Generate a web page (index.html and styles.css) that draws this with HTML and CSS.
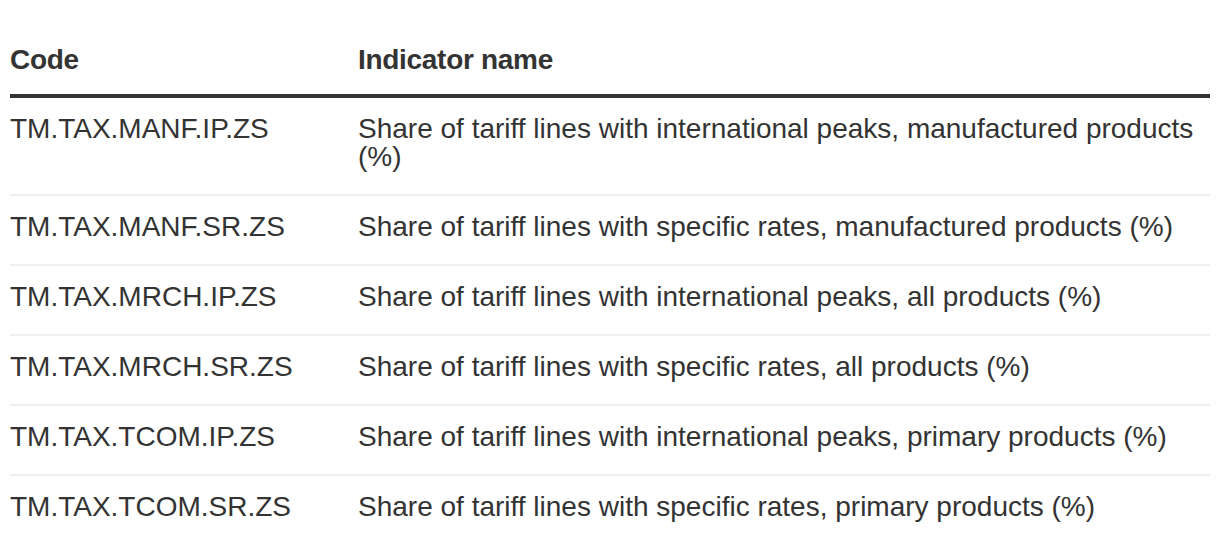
FILE: index.html
```html
<!DOCTYPE html>
<html lang="en">
<head>
<meta charset="utf-8">
<title>Indicators</title>
<link rel="stylesheet" href="styles.css">
</head>
<body>
<div class="wrap">
  <table class="indicators">
    <colgroup>
      <col class="col-code">
      <col class="col-name">
    </colgroup>
    <thead>
      <tr><th>Code</th><th>Indicator name</th></tr>
    </thead>
    <tbody>
      <tr><td>TM.TAX.MANF.IP.ZS</td><td>Share of tariff lines with international peaks, manufactured products (%)</td></tr>
      <tr><td>TM.TAX.MANF.SR.ZS</td><td>Share of tariff lines with specific rates, manufactured products (%)</td></tr>
      <tr><td>TM.TAX.MRCH.IP.ZS</td><td>Share of tariff lines with international peaks, all products (%)</td></tr>
      <tr><td>TM.TAX.MRCH.SR.ZS</td><td>Share of tariff lines with specific rates, all products (%)</td></tr>
      <tr><td>TM.TAX.TCOM.IP.ZS</td><td>Share of tariff lines with international peaks, primary products (%)</td></tr>
      <tr><td>TM.TAX.TCOM.SR.ZS</td><td>Share of tariff lines with specific rates, primary products (%)</td></tr>
    </tbody>
  </table>
</div>
</body>
</html>
```
FILE: styles.css
```css
html, body {
  margin: 0;
  padding: 0;
  background: #fff;
}
body {
  font-family: "Liberation Sans", Arial, Helvetica, sans-serif;
  color: #333;
}
.wrap {
  padding: 30px 10px 0 10px;
}
.indicators {
  width: 100%;
  border-collapse: collapse;
  table-layout: fixed;
}
.col-code {
  width: 348px;
}
.indicators th {
  text-align: left;
  font-weight: bold;
  font-size: 28px;
  line-height: 28px;
  padding: 16px 16px 20px 0;
  border-bottom: 4px solid #333;
  letter-spacing: -0.3px;
}
.indicators td {
  font-size: 28px;
  line-height: 28px;
  padding: 17px 16px 23px 0;
  vertical-align: top;
  border-bottom: 2px solid #eee;
}
.indicators tbody tr:last-child td {
  border-bottom: none;
}
```
